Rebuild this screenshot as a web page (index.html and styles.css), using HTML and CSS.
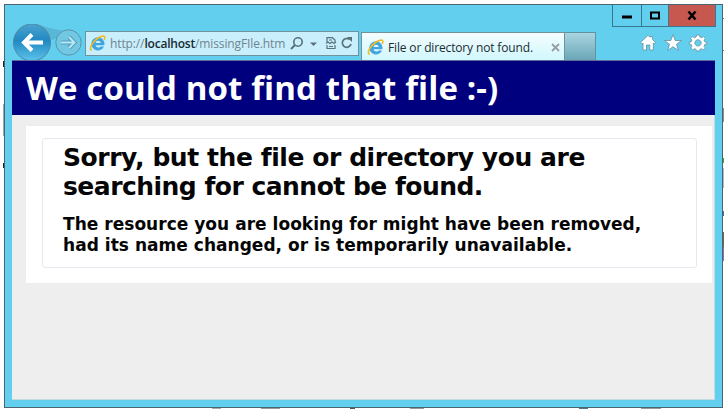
FILE: index.html
```html
<!DOCTYPE html>
<html lang="en">
<head>
<meta charset="utf-8">
<title>File or directory not found.</title>
<link rel="stylesheet" href="styles.css">
</head>
<body>
<svg width="0" height="0" class="defs">
  <defs>
    <linearGradient id="backFill" x1="0" y1="0" x2="0" y2="1"><stop offset="0" stop-color="#4ba3cf"/><stop offset=".45" stop-color="#2188c2"/><stop offset="1" stop-color="#5dc4ec"/></linearGradient>
    <symbol id="ie" viewBox="0 0 17 17">
      <path fill-rule="evenodd" fill="#42a5de" d="M8.800 2.300a6.400 6.400 0 0 1 6.500 7.900H6.600c.3 2.500 4 2.900 5 1.200h3.400A6.600 6.600 0 1 1 8.800 2.300zM6.600 7.900h5.100c-.3-3-4.800-3-5.100 0z"/>
      <path d="M2.600 15.600C-.2 14 2.600 7.600 8 3.700 11.800 1 15.600.300 15.800 2.400c.1.900-.2 1.700-.6 2.500" fill="none" stroke="#f0bc27" stroke-width="1.700"/>
    </symbol>
  </defs>
</svg>
<div class="window">
  <header class="chrome">
    <div class="titlebar">
      <div class="controls">
        <span class="ctl min"><svg width="28" height="21"><path d="M9 12h10" stroke="#000" stroke-width="3"/></svg></span>
        <span class="ctl max"><svg width="26" height="21"><rect x="9" y="7.500" width="8" height="6" fill="none" stroke="#000" stroke-width="2"/></svg></span>
        <span class="ctl close"><svg width="46" height="21"><path d="M19.500 6.500l7 8M26.500 6.500l-7 8" stroke="#000" stroke-width="2.500"/></svg></span>
      </div>
    </div>
    <div class="toolbar">
      <svg class="nav" width="72" height="36" viewBox="0 0 72 36">
        <path d="M27 1Q42 6 60 8L40 16Z" fill="#58b6d6"/>
        <circle cx="20" cy="18.500" r="18.500" fill="url(#backFill)" stroke="#4b87a3"/>
        <path d="M31 18.500H13M20 10.500l-8 8 8 8" fill="none" stroke="#fff" stroke-width="4"/>
        <circle cx="56.500" cy="18.500" r="12.700" fill="#72c7e3" stroke="#5595ae"/>
        <path d="M49 18.500h13M57 13l5.500 5.500L57 24" fill="none" stroke="#4f9dbb" stroke-width="4"/>
        <path d="M49 18.500h13M57 13l5.500 5.500L57 24" fill="none" stroke="#b9e8f5" stroke-width="2"/>
      </svg>
      <div class="address">
        <svg width="17" height="17"><use href="#ie"/></svg>
        <span class="url">http://<b>localhost</b>/missingFIle.htm</span>
        <svg class="tools" width="64" height="18" fill="none" stroke="#58717b">
          <circle cx="8" cy="7" r="4.200" stroke-width="1.600"/><path d="M5 10L1 14" stroke-width="2"/>
          <path d="M20 7.500h7l-3.500 3.500z" fill="#58717b" stroke="none"/>
          <path d="M37 7V2.700h5.500L45 5v2M37 10v3.500h8V10M36 8.500l2-1.500 2 1.500 2-1.500 2 1.500 2-1.500M39 5h3M39 11.500h4" stroke-width="1.200"/>
          <path d="M59.500 4.500A4.400 4.400 0 1 0 61 9" stroke-width="1.700"/><path d="M57 2h5v5z" fill="#58717b" stroke="none"/>
        </svg>
      </div>
      <div class="tab">
        <svg width="17" height="17"><use href="#ie"/></svg>
        <span class="tabtitle">File or directory not found.</span>
        <svg class="x" width="9" height="9"><path d="M1 1l7 7M8 1L1 8" stroke="#969fa2" stroke-width="1.800"/></svg>
      </div>
      <div class="newtab"></div>
      <svg class="icons" width="68" height="20" fill="#fff" stroke="#648f9f" stroke-width=".8">
        <path d="M.5 9.500L8 2.300l2 2V3.500h2.500v3l3 3-1.400 1.300-.8-.7V17H9.800v-5H6.500v5H3V10l-.8.800z"/>
        <path d="M33 1.500l2.200 6h6.300l-5 3.800L38.400 17.500 33 13.800 27.600 17.500 29.500 11.300 24.500 7.500h6.300z"/>
        <g transform="translate(58 9.500)"><path fill-rule="evenodd" d="M-1.500-7.500h3l.4 2 1.700.7 1.700-1.200 2 2-1.200 1.700.6 1.600 2 .4v2l-2 .4-.6 1.700L7.300 5.500l-2 2L3.600 6.200l-1.700.7-.4 1.600h-3l-.4-1.600-1.700-.7-1.700 1.200-2-2 1.200-1.700-.6-1.600-2-.4v-2l2-.4.600-1.600L-7.300-4l2-2 1.700 1.200 1.700-.7zM0-2.800a3.200 3.200 0 1 0 .01 0z"/></g>
      </svg>
    </div>
  </header>
  <main class="page">
    <div class="banner"><h1>We could not find that file :-)</h1></div>
    <div class="card">
      <div class="box">
        <h2><span class="a1">Sorry, but the file or directory you are</span><br><span class="a2">searching for cannot be found.</span></h2>
        <h3><span class="b1">The resource you are looking for might have been removed,</span><br><span class="b2">had its name changed, or is temporarily unavailable.</span></h3>
      </div>
    </div>
  </main>
</div>
</body>
</html>
```

FILE: styles.css
```css
* { box-sizing: border-box; }
body {
  margin: 0; width: 728px; height: 412px; overflow: hidden; padding: 4px 0 0 4px;
  background:
    linear-gradient(#222, #222) 3px 61px / 1px 6px no-repeat,
    linear-gradient(#99a5b0, #99a5b0) 3px 104px / 1px 32px no-repeat,
    linear-gradient(#222, #222) 3px 163px / 1px 5px no-repeat,
    linear-gradient(#777, #777) 723px 18px / 1px 1px no-repeat,
    linear-gradient(#777, #777) 723px 50px / 1px 1px no-repeat,
    linear-gradient(#8e8a9c, #8e8a9c) 723px 108px / 1px 14px no-repeat,
    linear-gradient(#39a83c, #39a83c) 723px 158px / 1px 5px no-repeat,
    linear-gradient(#a9b8c8, #a9b8c8) 723px 168px / 1px 20px no-repeat,
    linear-gradient(#46708d, #46708d) 723px 211px / 1px 5px no-repeat,
    linear-gradient(#7c604b 40%, #8b73a8 60%) 723px 232px / 1px 29px no-repeat,
    linear-gradient(#aaa, #aaa) 212px 408px / 9px 1px no-repeat,
    linear-gradient(#999, #999) 261px 408px / 19px 1px no-repeat,
    linear-gradient(#555, #555) 350px 408px / 5px 1px no-repeat,
    linear-gradient(#999, #999) 410px 408px / 14px 1px no-repeat,
    linear-gradient(#567287, #567287) 579px 408px / 9px 1px no-repeat,
    linear-gradient(#999, #999) 641px 408px / 20px 1px no-repeat,
    #fff;
}
svg { display: block; flex: none; }
.defs { position: absolute; }
.window { width: 719px; height: 404px; border: 1px solid #4a6570; background: #62cfee; padding: 0 7px 7px; display: flex; flex-direction: column; }
.chrome { height: 55px; flex: none; }
.titlebar { height: 21px; display: flex; justify-content: flex-end; margin-right: -1px; }
.controls { display: flex; height: 22px; border: 1px solid #38788e; border-top: 0; }
.ctl { display: block; overflow: hidden; }
.ctl + .ctl { border-left: 1px solid #38788e; }
.close { background: #c75850; }
.toolbar { height: 34px; display: flex; align-items: flex-start; }
.nav { height: 36px; margin: -2px 1px 0 0; }
.address { width: 274px; height: 25px; margin-top: 5px; border: 1px solid #70929d; background: #c9eefc; display: flex; align-items: center; padding-left: 3px; }
.url { font: 12px "Open Sans", sans-serif; letter-spacing: -.12px; color: #70858e; margin-left: 4px; width: 177px; white-space: nowrap; }
.url b { font-weight: 600; letter-spacing: -.2px; color: #182a31; }
.tools { margin-left: 3px; }
.tab { width: 204px; height: 29px; margin: 6px 0 0 2px; border: 1px solid #70929d; border-bottom: 0; background: linear-gradient(#f5fdff, #cef7fd); display: flex; align-items: center; padding-left: 5px; }
.tabtitle { font: 12px "Open Sans", sans-serif; letter-spacing: -.15px; color: #202b30; margin-left: 4px; width: 163px; white-space: nowrap; }
.newtab { width: 31px; height: 28px; margin-top: 6px; border: 1px solid #62919f; border-left: 0; border-bottom: 0; background: linear-gradient(#a9d5e1, #6ba6b7); }
.icons { margin: 7px 0 0 44px; }
.page { flex: 1; background: #eee; border: solid #c6dce3; border-width: 0 1px 1px 0; }
.banner { height: 55px; background: #00007f; border-top: 1px solid #636a99; padding-left: 14px; margin-right: -1px; }
h1 { margin: 0; font: 700 33px/54px "Open Sans", sans-serif; letter-spacing: .12px; color: #fff; white-space: nowrap; }
.card { margin: 11px 2px 0 14px; height: 157px; background: #fff; padding: 12px 15px 15px 16px; }
.box { height: 130px; border: 1px solid #e3e9ef; border-radius: 3px; padding: 4px 0 0 20px; color: #050505; white-space: nowrap; }
h2 { margin: 0; font: 700 25px/29px "DejaVu Sans", sans-serif; }
h3 { margin: 13px 0 0; font: 700 17px/21px "DejaVu Sans", sans-serif; }
.a1 { letter-spacing: -.43px; }
.a2 { letter-spacing: -.52px; }
.b1, .b2 { letter-spacing: .03px; }
```
